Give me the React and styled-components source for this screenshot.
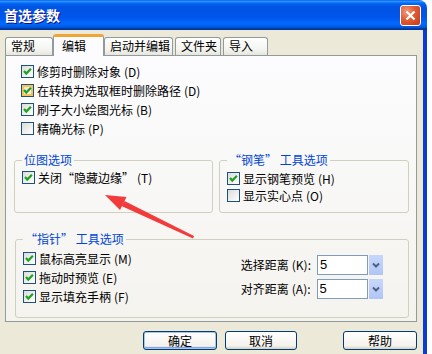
import styled, { createGlobalStyle } from 'styled-components'

const GlobalStyle = createGlobalStyle`
  html, body {
    margin: 0;
    padding: 0;
    background: #fff;
  }
  body {
    font-family: "SimSun", "Noto Sans CJK SC", sans-serif;
    font-size: 12px;
    color: #000;
  }
`;

const tabs = [
  { label: '常规', w: 48 },
  { label: '编辑', w: 51, active: true },
  { label: '启动并编辑', w: 69, gap: 2 },
  { label: '文件夹', w: 46, gap: 2 },
  { label: '导入', w: 45 },
];

const Check = ({ on, hot }) => (
  <Box $hot={hot}>
    {on && (
      <svg width="11" height="11" viewBox="0 0 11 11">
        <path d="M2 5 L4.3 7.6 L8.9 2.8" stroke="#21A121" strokeWidth="2.2" fill="none" />
      </svg>
    )}
  </Box>
);

const Option = ({ on, hot, text, hotkey, h }) => (
  <Row $h={h}>
    <Check on={on} hot={hot} />
    <span>
      {text}
      <Key>({hotkey})</Key>
    </span>
  </Row>
);

const Combo = ({ label, hotkey, value }) => (
  <Field>
    <span>
      {label}
      <Key>({hotkey}):</Key>
    </span>
    <Input>{value}</Input>
    <DropButton>
      <svg width="10" height="10" viewBox="0 0 10 10">
        <path d="M2 3.5 L5 6.5 L8 3.5" stroke="#4D6185" strokeWidth="2" fill="none" />
      </svg>
    </DropButton>
  </Field>
);

const App = () => {
  return (
    <Frame>
      <GlobalStyle />
      <TitleBar>
        <Title>首选参数</Title>
        <CloseButton>
          <svg width="11" height="11" viewBox="0 0 11 11">
            <path d="M1.5 1.5 L9.5 9.5 M9.5 1.5 L1.5 9.5" stroke="#fff" strokeWidth="2.2" />
          </svg>
        </CloseButton>
      </TitleBar>

      <Body>
        <TabStrip>
          {tabs.map((t) => (
            <Tab key={t.label} $w={t.w} $active={t.active} $gap={t.gap}>
              {t.label}
            </Tab>
          ))}
        </TabStrip>

        <Panel>
          <OptionList>
            <Option on text="修剪时删除对象" hotkey="D" />
            <Option on hot text="在转换为选取框时删除路径" hotkey="D" />
            <Option on text="刷子大小绘图光标" hotkey="B" />
            <Option text="精确光标" hotkey="P" />
          </OptionList>

          <GroupRow>
            <Group $w={199} $h={59}>
              <Legend>位图选项</Legend>
              <GroupBody $top={2}>
                <Option on text="关闭“隐藏边缘”" hotkey="T" />
              </GroupBody>
            </Group>
            <Group $w={190} $h={59}>
              <Legend>“钢笔” 工具选项</Legend>
              <GroupBody $top={4}>
                <Option on h={17} text="显示钢笔预览" hotkey="H" />
                <Option h={17} text="显示实心点" hotkey="O" />
              </GroupBody>
            </Group>
          </GroupRow>

          <PointerGroup $w={394} $h={85}>
            <Legend>“指针” 工具选项</Legend>
            <Columns>
              <GroupBody $top={4}>
                <Option on text="鼠标高亮显示" hotkey="M" />
                <Option on text="拖动时预览" hotkey="E" />
                <Option on text="显示填充手柄" hotkey="F" />
              </GroupBody>
              <Fields>
                <Combo label="选择距离" hotkey="K" value="5" />
                <Combo label="对齐距离" hotkey="A" value="5" />
              </Fields>
            </Columns>
          </PointerGroup>
        </Panel>

        <ButtonRow>
          <Button $w={74} $default>确定</Button>
          <Button $w={72}>取消</Button>
          <HelpButton $w={74}>帮助</HelpButton>
        </ButtonRow>
      </Body>

      <Arrow width="432" height="354" viewBox="0 0 432 354">
        <polygon points="194,236 193,238.5 121.5,206 124.5,201" fill="#F23B3B" />
        <polygon points="105,195 126.5,197 120,210" fill="#F23B3B" />
      </Arrow>
    </Frame>
  );
};

const Frame = styled.div`
position: relative;
width: 427px;
height: 354px;
display: flex;
flex-direction: column;
border-top-right-radius: 8px;
overflow: hidden;
`;

const TitleBar = styled.div`
height: 30px;
flex: none;
display: flex;
align-items: center;
justify-content: space-between;
padding: 0 6px 0 4px;
background: linear-gradient(#0058ee 0%, #3593ff 4%, #288eff 6%, #127dff 8%, #036ffc 10%, #0262ee 14%, #0057e5 20%, #0054e3 24%, #0055eb 56%, #005bf5 66%, #026afe 76%, #0062ef 86%, #0052d6 92%, #0040ab 94%, #003092 100%);
`;

const Title = styled.div`
color: #fff;
font-size: 14px;
font-weight: bold;
line-height: 16px;
text-shadow: 1px 1px 0 #0f1089;
`;

const CloseButton = styled.div`
width: 21px;
height: 21px;
box-sizing: border-box;
border: 1px solid #fff;
border-radius: 3px;
background: radial-gradient(circle at 30% 30%, #f09a80 0%, #e05a32 45%, #c33a15 100%);
display: flex;
align-items: center;
justify-content: center;
`;

const Body = styled.div`
flex: 1;
background: #ece9d8;
border-right: 4px solid #0a3bd2;
padding: 4px 6px 0 5px;
display: flex;
flex-direction: column;
`;

const TabStrip = styled.div`
height: 21px;
display: flex;
align-items: flex-end;
position: relative;
z-index: 1;
`;

const Tab = styled.div`
width: ${(p) => p.$w}px;
margin-right: ${(p) => p.$gap || 0}px;
box-sizing: border-box;
height: ${(p) => (p.$active ? 22 : 18)}px;
margin-bottom: ${(p) => (p.$active ? -1 : 0)}px;
padding-left: ${(p) => (p.$active ? 8 : 5)}px;
border: 1px solid #919b9c;
border-bottom: none;
border-top: ${(p) => (p.$active ? '3px solid #f2a537' : '1px solid #919b9c')};
border-radius: 3px 3px 0 0;
background: ${(p) => (p.$active ? '#fcfcfe' : 'linear-gradient(#ffffff, #f3f3ef 70%, #e6e5dc)')};
line-height: ${(p) => (p.$active ? 17 : 16)}px;
font-size: 12px;
white-space: nowrap;
`;

const Panel = styled.div`
height: 267px;
box-sizing: border-box;
border: 1px solid #919b9c;
background: linear-gradient(#fcfcfe, #f4f3ee);
display: flex;
flex-direction: column;
`;

const OptionList = styled.div`
margin-top: 6px;
padding-left: 15px;
`;

const Row = styled.div`
height: ${(p) => p.$h || 19}px;
display: flex;
align-items: center;
gap: 3px;
white-space: nowrap;
line-height: 12px;
`;

const Key = styled.span`
margin-left: 3px;
`;

const Box = styled.span`
width: 13px;
height: 13px;
flex: none;
box-sizing: border-box;
border: 1px solid #1c5180;
background: linear-gradient(135deg, #dcdcd7 0%, #ffffff 100%);
display: inline-flex;
align-items: center;
justify-content: center;
box-shadow: ${(p) => (p.$hot ? 'inset 0 0 0 2px #f9c35a' : 'none')};
`;

const GroupRow = styled.div`
margin: 16px 0 0 8px;
display: flex;
gap: 6px;
`;

const Group = styled.fieldset`
margin: 0;
padding: 0;
width: ${(p) => p.$w}px;
height: ${(p) => p.$h}px;
box-sizing: border-box;
border: 1px solid #d0d0bf;
border-radius: 3px;
`;

const PointerGroup = styled(Group)`
margin: 20px 0 0 9px;
`;

const Legend = styled.legend`
margin-left: 7px;
padding: 0 2px;
color: #0046d5;
font-size: 12px;
line-height: 12px;
`;

const GroupBody = styled.div`
padding: ${(p) => p.$top}px 0 0 7px;
`;

const Columns = styled.div`
display: flex;
justify-content: space-between;
`;

const Fields = styled.div`
padding: 10px 25px 0 0;
display: flex;
flex-direction: column;
gap: 4px;
`;

const Field = styled.div`
display: flex;
align-items: center;
height: 20px;
white-space: nowrap;
line-height: 12px;

& > span {
    margin-right: 6px;
}
`;

const Input = styled.div`
width: 51px;
height: 20px;
box-sizing: border-box;
border: 1px solid #7f9db9;
background: #fff;
padding-left: 2px;
font-family: "Liberation Sans", sans-serif;
font-size: 13px;
line-height: 18px;
`;

const DropButton = styled.div`
width: 14px;
height: 20px;
margin-left: 1px;
background: linear-gradient(#c8d8fc, #b0c5f6);
display: flex;
align-items: center;
justify-content: center;
`;

const ButtonRow = styled.div`
margin-top: 9px;
display: flex;
justify-content: flex-end;
gap: 8px;
`;

const Button = styled.button`
width: ${(p) => p.$w}px;
height: 19px;
padding: 0;
border: 1px solid #003c74;
border-radius: 3px;
background: linear-gradient(#ffffff, #f3f2ed 80%, #d6d0c5);
font-family: "SimSun", "Noto Sans CJK SC", sans-serif;
font-size: 12px;
line-height: 15px;
color: #000;
box-shadow: ${(p) => (p.$default ? 'inset 0 0 0 1px #a9c4f0, inset 0 -1px 0 1px #7fa4e6' : 'none')};
`;

const HelpButton = styled(Button)`
margin-left: 38px;
`;

const Arrow = styled.svg`
position: absolute;
left: 0;
top: 0;
pointer-events: none;
`;

export default App;
